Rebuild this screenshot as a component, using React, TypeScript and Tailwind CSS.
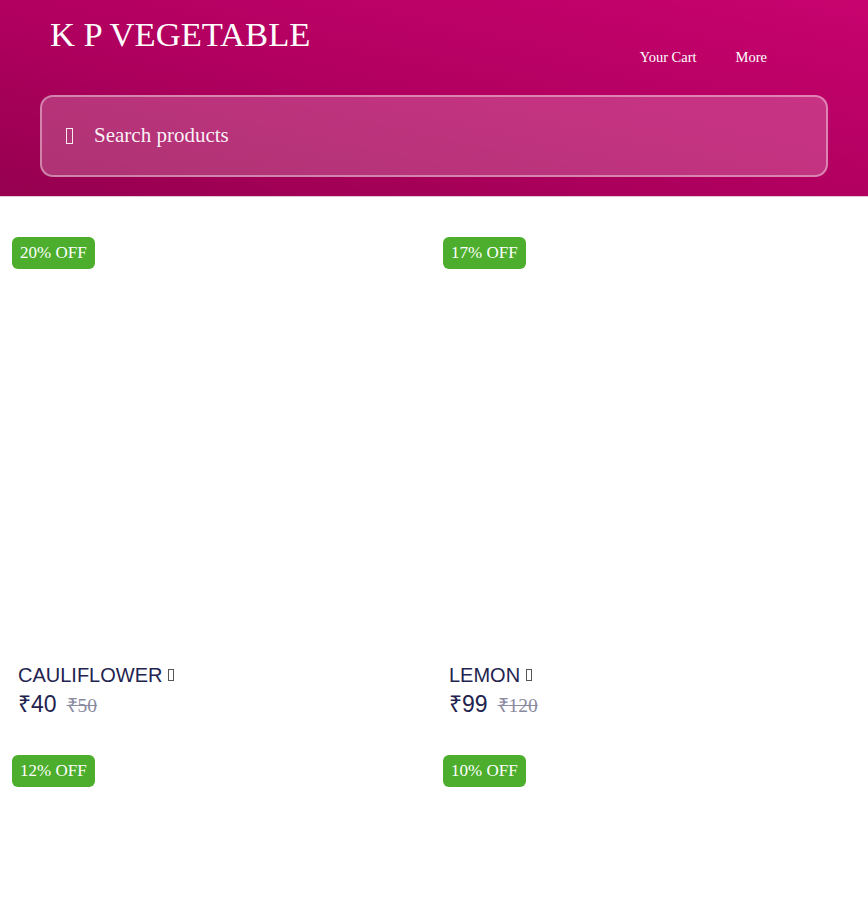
import React from 'react'

interface Product {
  id: string
  name: string
  price: number
  mrp: number
  off: number
}

const products: Product[] = [
  { id: 'cauliflower', name: 'CAULIFLOWER', price: 40, mrp: 50, off: 20 },
  { id: 'lemon', name: 'LEMON', price: 99, mrp: 120, off: 17 },
  { id: 'p3', name: 'TOMATO', price: 44, mrp: 50, off: 12 },
  { id: 'p4', name: 'ONION', price: 45, mrp: 50, off: 10 },
]

// missing icon-font glyph, shown as a tofu box
function Tofu({ className }: { className?: string }) {
  return <span className={'inline-block border ' + (className ?? '')} />
}

function ProductCard({ product }: { product: Product }) {
  return (
    <div className="flex flex-col">
      {/* Image */}
      <div className="relative h-[428px] bg-white">
        <span className="absolute left-3 top-3 rounded-md bg-[#4cae2c] px-[8px] py-[5px] text-[17px] leading-[22px] text-white [font-family:'Liberation_Serif',serif]">
          {product.off}% OFF
        </span>
      </div>

      {/* Content */}
      <div className="mt-[8px] px-[18px] [font-family:'Liberation_Sans',sans-serif]">
        <p className="flex items-center gap-[6px] text-[20px] leading-[28px] text-[#23234f]">
          {product.name}
          <Tofu className="h-[12px] w-[6px] border-[#555]" />
        </p>
        <div className="flex items-baseline gap-[10px] text-[#23234f]">
          <span className="text-[23px] leading-[30px]">₹{product.price}</span>
          <span className="text-[19.5px] text-[#8a8aa0] line-through [font-family:'Liberation_Serif',serif]">
            ₹{product.mrp}
          </span>
        </div>
      </div>
    </div>
  )
}

export default function App() {
  return (
    <div className="min-h-[900px] bg-white">
      {/* Header */}
      <header className="h-[197px] border-b border-[#e9c3d6] bg-linear-to-tr from-[#96004f] via-[#b20060] to-[#c8036f] px-[40px] pt-[14px] text-white [font-family:'Liberation_Serif',serif]">
        <div className="flex items-start justify-between">
          <h1 className="pl-[10px] text-[34.6px] leading-[40px]">K P VEGETABLE</h1>
          <nav className="mr-[61px] mt-[33px] flex gap-[39px] text-[14.5px]">
            <span>Your Cart</span>
            <span>More</span>
          </nav>
        </div>
        <div className="mt-[26px] flex h-[82px] items-center gap-[21px] rounded-[13px] border-2 border-white/40 bg-white/20 px-[24px]">
          <Tofu className="h-[16px] w-[7px] border-white/90" />
          <span className="text-[21px] text-white/95">Search products</span>
        </div>
      </header>

      {/* Products */}
      <main className="grid grid-cols-[431px_431px] gap-y-[23px] pt-[28px]">
        {products.map((p) => (
          <ProductCard key={p.id} product={p} />
        ))}
      </main>
    </div>
  )
}
